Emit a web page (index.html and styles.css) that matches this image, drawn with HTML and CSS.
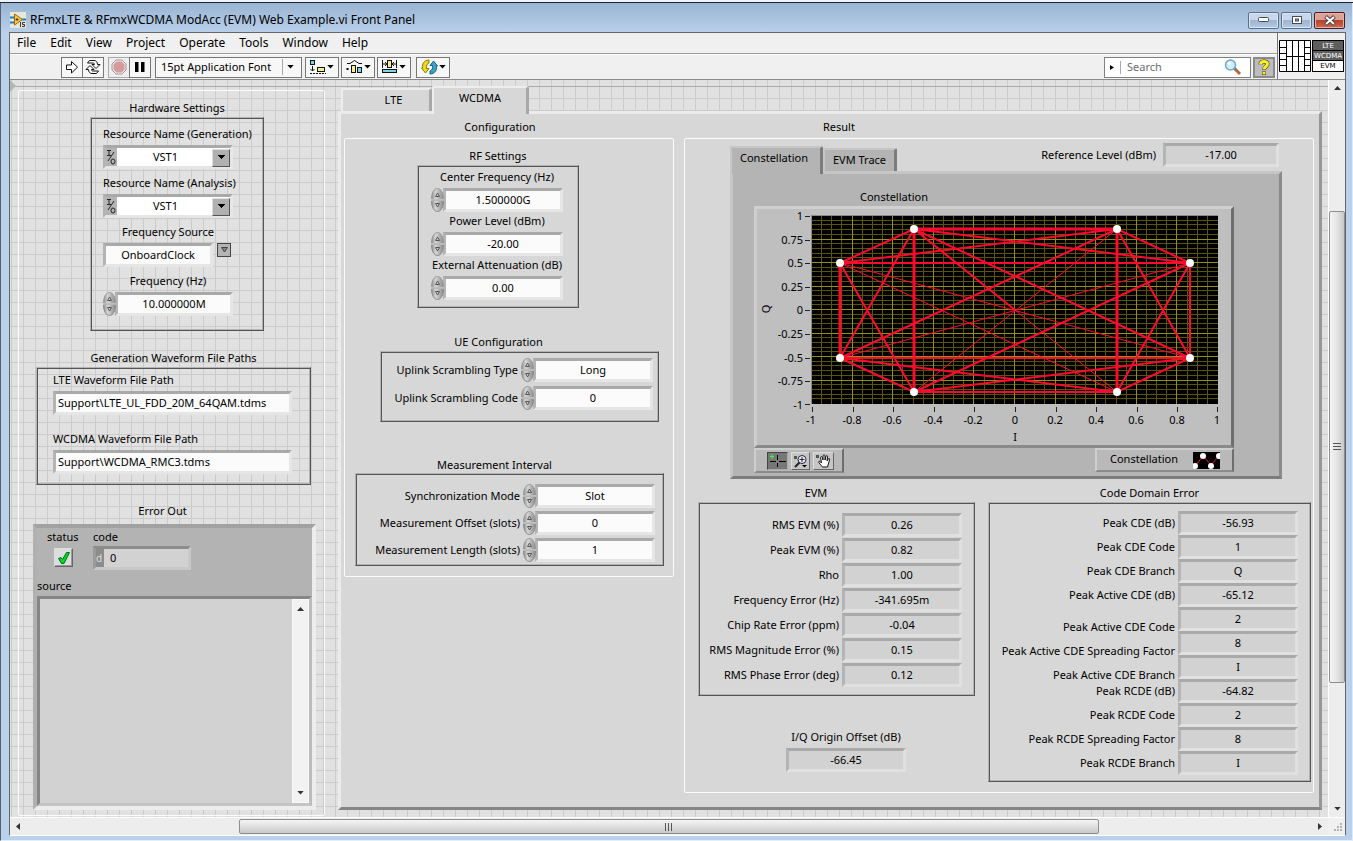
FILE: index.html
```html
<!DOCTYPE html>
<html lang="en">
<head>
<meta charset="utf-8">
<title>RFmxLTE &amp; RFmxWCDMA ModAcc (EVM) Web Example.vi Front Panel</title>
<link rel="stylesheet" href="styles.css">
</head>
<body>
<svg class="defs" aria-hidden="true">
  <defs>
    <linearGradient id="knob" x1="0" y1="0" x2="1" y2="0">
      <stop offset="0" stop-color="#8c8c8c"/><stop offset="0.35" stop-color="#d6d6d6"/><stop offset="1" stop-color="#8a8a8a"/>
    </linearGradient>
    <symbol id="spin" viewBox="0 0 13 24">
      <path d="M0.5 11.5C0.5 5 3 0.5 6.5 0.5S12.5 5 12.5 11.5Z" fill="url(#knob)" stroke="#999"/>
      <path d="M0.5 12.5C0.5 19 3 23.5 6.5 23.5S12.5 19 12.5 12.5Z" fill="url(#knob)" stroke="#8a8a8a"/>
      <path d="M4.500 8.500L6.500 5L8.500 8.500Z" fill="#ccc" stroke="#555"/>
      <path d="M4.500 15.500L6.500 19L8.500 15.500Z" fill="#ccc" stroke="#555"/>
      <path d="M0 12H13" stroke="#e4e4e4"/>
    </symbol>
    <symbol id="down" viewBox="0 0 8 5"><path d="M0 0H8L4 4.5Z"/></symbol>
  </defs>
</svg>

<div class="behind"></div>
<div class="window">
  <header class="titlebar">
    <svg class="vi-icon" width="16" height="16" viewBox="0 0 16 16">
      <rect width="16" height="16" fill="#e9e6da"/>
      <path d="M0 5.5H5M0 10.5H5M11 7.5H16" stroke="#1d7fc0" stroke-width="2"/>
      <path d="M4.500 2L12.500 7.500L4.500 13Z" fill="#f6c64a" stroke="#9b6a10"/>
      <path d="M5.500 7.500H8.500M7 6V9" stroke="#5a3a00"/>
      <path d="M10.500 10V15M15 10.500H12.500V12.500H14.500V14.500H12" stroke="#333" fill="none"/>
    </svg>
    <h1>RFmxLTE &amp; RFmxWCDMA ModAcc (EVM) Web Example.vi Front Panel</h1>
    <div class="win-buttons">
      <button class="win-btn" aria-label="Minimize"><svg width="12" height="6"><rect x="0.5" y="0.5" width="10" height="4" rx="1" fill="#fff" stroke="#454b58"/></svg></button>
      <button class="win-btn" aria-label="Restore"><svg width="12" height="10"><rect x="1.5" y="1.500" width="9" height="7" fill="#fff" stroke="#454b58"/><rect x="4.500" y="4" width="3" height="2" fill="#8ba6c8" stroke="#454b58"/></svg></button>
      <button class="win-btn close" aria-label="Close"><svg width="14" height="11"><path d="M2.500 1.500L11.500 9.500M11.500 1.500L2.500 9.500" stroke="#4b4347" stroke-width="4"/><path d="M3 2L11 9M11 2L3 9" stroke="#fff" stroke-width="2"/></svg></button>
    </div>
  </header>

  <div class="client">
    <div class="bars">
      <div class="bars-main">
        <nav class="menu">
          <button>File</button><button>Edit</button><button>View</button><button>Project</button><button>Operate</button><button>Tools</button><button>Window</button><button>Help</button>
        </nav>
        <div class="toolbar">
          <div class="tool-group">
            <button class="tool" aria-label="Run"><svg width="14" height="14" viewBox="0 0 14 14"><path d="M1.500 5V9.500H6.500V13L12.500 7.200L6.500 1.500V5Z" fill="#fff" stroke="#111"/></svg></button>
            <button class="tool" aria-label="Run continuously"><svg width="16" height="16" viewBox="0 0 16 16" fill="none" stroke="#111"><path d="M4.500 1.500H9C11 1.500 12.500 3 12.500 5.500H15L11 9.500L7 5.500H9.500C9.500 4.500 9 4 8 4H2.500Z" fill="#fff"/><path d="M11.500 14.500H7C5 14.500 3.500 13 3.500 10.500H1L5 6.500L9 10.500H6.500C6.500 11.500 7 12 8 12H13.500Z" fill="#fff"/></svg></button>
          </div>
          <div class="tool-group">
            <button class="tool dim" aria-label="Abort"><svg width="16" height="16" viewBox="0 0 16 16"><path d="M5 1H11L15 5V11L11 15H5L1 11V5Z" fill="#f2e8e8" stroke="#9a9a9a"/><path d="M5.500 2.500H10.500L13.500 5.500V10.500L10.500 13.500H5.500L2.500 10.500V5.500Z" fill="#d79a9a"/></svg></button>
            <button class="tool" aria-label="Pause"><svg width="12" height="12"><path d="M1 1H4.500V11H1ZM7 1H10.500V11H7Z"/></svg></button>
          </div>
          <button class="tool font-box"><span>15pt Application Font</span><i></i><svg width="7" height="4"><use href="#down"/></svg></button>
          <button class="tool drop" aria-label="Align objects"><svg width="16" height="14" viewBox="0 0 16 14"><rect x="0.500" y="0.500" width="4" height="4" fill="#7fd4ea" stroke="#111"/><rect x="7.500" y="7.500" width="7" height="4" fill="#f7ef8a" stroke="#111"/><path d="M2.500 6V11M0.500 9L2.500 11L4.500 9" stroke="#111" fill="none"/><path d="M0 13.500H16" stroke="#111" stroke-dasharray="2 1"/></svg><svg width="7" height="4"><use href="#down"/></svg></button>
          <button class="tool drop" aria-label="Distribute objects"><svg width="17" height="14" viewBox="0 0 17 14"><path d="M1 3.500H4L8.500 0.500L13 3.500H16" stroke="#111" fill="none"/><rect x="0.500" y="8" width="2" height="2"/><rect x="5.500" y="5.500" width="4" height="7" fill="#f7ef8a" stroke="#111"/><rect x="11.500" y="7.500" width="4" height="5" fill="#7fd4ea" stroke="#111"/></svg><svg width="7" height="4"><use href="#down"/></svg></button>
          <button class="tool drop" aria-label="Resize objects"><svg width="16" height="14" viewBox="0 0 16 14"><rect x="5.500" y="0.500" width="4" height="7" fill="#f7ef8a" stroke="#111"/><path d="M0.500 0V8M14.500 0V8M1 4H5M10 4H14M3 2L5 4L3 6M12 2L10 4L12 6" stroke="#111" fill="none"/><rect x="0.500" y="9.500" width="14" height="3" fill="#7fd4ea" stroke="#111"/></svg><svg width="7" height="4"><use href="#down"/></svg></button>
          <button class="tool drop last" aria-label="Reorder"><svg width="17" height="16" viewBox="0 0 17 16"><path d="M8 1C3 1 1 5 1.500 9H0.500L4.500 14L8 9.500H5.500C5 7 6 4.500 8 4Z" fill="#ecd81c" stroke="#8f7a00"/><path d="M9 15C14 15 16 11 15.500 7H16.500L12.500 2L9 6.500H11.500C12 9 11 11.500 9 12Z" fill="#3fa3c4" stroke="#15627e"/></svg><svg width="7" height="4"><use href="#down"/></svg></button>
          <div class="search">
            <svg width="6" height="11"><path d="M0 3L4 5.500L0 8Z"/></svg>
            <input type="text" placeholder="Search" aria-label="Search">
            <svg width="18" height="17" viewBox="0 0 18 17"><path d="M10 9L16 15" stroke="#b5663c" stroke-width="3"/><path d="M9.500 8.500L12 11" stroke="#777" stroke-width="2"/><circle cx="6.500" cy="6" r="5" fill="#cfeefb" stroke="#6fa5cf" stroke-width="1.500"/><circle cx="5" cy="4.500" r="1.500" fill="#fff"/></svg>
          </div>
          <button class="tool help" aria-label="Context help"><svg width="12" height="17" viewBox="0 0 12 17"><path d="M2.500 5.500C2.500 1.500 9.500 1.500 9.500 5C9.500 7.500 6 7.500 6 11M6 12.500V16" fill="none" stroke="#333" stroke-width="4"/><path d="M2.500 5.500C2.500 1.500 9.500 1.500 9.500 5C9.500 7.500 6 7.500 6 10.500M6 13V15.500" fill="none" stroke="#fff01a" stroke-width="3"/></svg></button>
        </div>
      </div>
      <div class="connector">
        <svg width="32" height="32" viewBox="0 0 32 32"><path d="M0.500 0.500H31.500V31.500H0.500ZM7.500 0.500V31.500M13.500 0.500V31.500M19.500 0.500V31.500M25.500 0.500V31.500M7.500 16.500H25.500M0.500 7.500H7.500M0.500 13.500H7.500M0.500 19.500H7.500M0.500 25.500H7.500M25.500 7.500H31.500M25.500 13.500H31.500M25.500 19.500H31.500M25.500 25.500H31.500" fill="#fff" stroke="#000"/></svg>
        <div class="vi-badge"><b>LTE</b><b>WCDMA</b><em>EVM</em></div>
      </div>
    </div>

    <div class="middle">
      <main class="workspace">
        <section class="left-frame">
          <div class="sec hw">
            <h2>Hardware Settings</h2>
            <div class="box">
              <div class="field"><label for="rg">Resource Name (Generation)</label>
                <div class="io"><span class="io-mark"><svg width="10" height="16" viewBox="0 0 10 16" fill="none" stroke="#222"><path d="M1 1.500H5M3 1.500V6.500M1 6.500H5M8 3L2 12"/><ellipse cx="7" cy="12.500" rx="2" ry="2.500"/></svg></span>
                  <select id="rg"><option>VST1</option></select></div></div>
              <div class="field"><label for="ra">Resource Name (Analysis)</label>
                <div class="io"><span class="io-mark"><svg width="10" height="16" viewBox="0 0 10 16" fill="none" stroke="#222"><path d="M1 1.500H5M3 1.500V6.500M1 6.500H5M8 3L2 12"/><ellipse cx="7" cy="12.500" rx="2" ry="2.500"/></svg></span>
                  <select id="ra"><option>VST1</option></select></div></div>
              <div class="field"><label for="fs">Frequency Source</label>
                <div class="combo"><input class="val" id="fs" type="text" value="OnboardClock"><button aria-label="Open list"><svg width="7" height="6"><path d="M0.500 0.500H6.500L3.500 5Z" fill="#888" stroke="#444"/></svg></button></div></div>
              <div class="field"><label for="fq">Frequency (Hz)</label>
                <div class="num"><button class="spin" aria-label="Step frequency"><svg><use href="#spin"/></svg></button><input class="val" id="fq" type="text" value="10.000000M"></div></div>
            </div>
          </div>

          <div class="sec paths">
            <h2>Generation Waveform File Paths</h2>
            <div class="box">
              <div class="field"><label for="lp">LTE Waveform File Path</label><input class="val" id="lp" type="text" value="Support\LTE_UL_FDD_20M_64QAM.tdms"></div>
              <div class="field"><label for="wp">WCDMA Waveform File Path</label><input class="val" id="wp" type="text" value="Support\WCDMA_RMC3.tdms"></div>
            </div>
          </div>

          <div class="sec err">
            <h2>Error Out</h2>
            <div class="cluster">
              <div class="cluster-top">
                <div class="status"><span>status</span><div class="led"><svg width="14" height="14" viewBox="0 0 14 14"><path d="M1.500 7.500L4 6.500L5.500 8.500L9.500 1.500H12.500L7 12.500H4.500Z" fill="#00e000" stroke="#064"/></svg></div></div>
                <div class="code"><label for="cd">code</label><div class="code-field"><span>d</span><output id="cd">0</output></div></div>
              </div>
              <label for="src" class="src-label">source</label>
              <div class="source">
                <output id="src"></output>
                <div class="mini-scroll"><svg width="7" height="4"><path d="M0 4L3.500 0L7 4Z" fill="#333"/></svg><svg width="7" height="4" fill="#333"><use href="#down"/></svg></div>
              </div>
            </div>
          </div>
        </section>

        <section class="tabs-outer">
          <div class="tabs big" role="tablist">
            <button role="tab" class="tab lte">LTE</button><button role="tab" class="tab on wcdma" aria-selected="true">WCDMA</button>
          </div>
          <div class="tab-page">
            <div class="config">
              <h2 class="page-title">Configuration</h2>
              <div class="frame">
                <div class="sec rf">
                  <h2>RF Settings</h2>
                  <div class="box">
                    <div class="field"><label for="cf">Center Frequency (Hz)</label><div class="num"><button class="spin" aria-label="Step center frequency"><svg><use href="#spin"/></svg></button><input class="val" id="cf" type="text" value="1.500000G"></div></div>
                    <div class="field"><label for="pl">Power Level (dBm)</label><div class="num"><button class="spin" aria-label="Step power level"><svg><use href="#spin"/></svg></button><input class="val" id="pl" type="text" value="-20.00"></div></div>
                    <div class="field"><label for="ea">External Attenuation (dB)</label><div class="num"><button class="spin" aria-label="Step attenuation"><svg><use href="#spin"/></svg></button><input class="val" id="ea" type="text" value="0.00"></div></div>
                  </div>
                </div>
                <div class="sec ue">
                  <h2>UE Configuration</h2>
                  <div class="box">
                    <div class="row"><label for="ut">Uplink Scrambling Type</label><div class="num"><button class="spin" aria-label="Step scrambling type"><svg><use href="#spin"/></svg></button><input class="val" id="ut" type="text" value="Long"></div></div>
                    <div class="row"><label for="uc">Uplink Scrambling Code</label><div class="num"><button class="spin" aria-label="Step scrambling code"><svg><use href="#spin"/></svg></button><input class="val" id="uc" type="text" value="0"></div></div>
                  </div>
                </div>
                <div class="sec meas">
                  <h2>Measurement Interval</h2>
                  <div class="box">
                    <div class="row"><label for="sm">Synchronization Mode</label><div class="num"><button class="spin" aria-label="Step mode"><svg><use href="#spin"/></svg></button><input class="val" id="sm" type="text" value="Slot"></div></div>
                    <div class="row"><label for="mo">Measurement Offset (slots)</label><div class="num"><button class="spin" aria-label="Step offset"><svg><use href="#spin"/></svg></button><input class="val" id="mo" type="text" value="0"></div></div>
                    <div class="row"><label for="ml">Measurement Length (slots)</label><div class="num"><button class="spin" aria-label="Step length"><svg><use href="#spin"/></svg></button><input class="val" id="ml" type="text" value="1"></div></div>
                  </div>
                </div>
              </div>
            </div>

            <div class="result">
              <h2 class="page-title">Result</h2>
              <div class="frame">
                <div class="result-head">
                  <div class="tabs" role="tablist"><button role="tab" class="tab on" aria-selected="true">Constellation</button><button role="tab" class="tab">EVM Trace</button></div>
                  <div class="row ref"><label for="rl">Reference Level (dBm)</label><output class="ind" id="rl">-17.00</output></div>
                </div>
                <div class="graph-page">
                  <div class="graph-wrap">
                    <h3>Constellation</h3>
                    <div class="graph">
                      <svg width="474" height="236" viewBox="3 3 474 236">
                        <g class="ticks">
                          <path d="M51 10.500H56M51 34.500H56M51 57.500H56M51 81.500H56M51 104.500H56M51 128.500H56M51 152.500H56M51 175.500H56M51 198.500H56M58.500 201V206M99.500 201V206M139.500 201V206M180.500 201V206M220.500 201V206M261.500 201V206M302.500 201V206M342.500 201V206M383.500 201V206M423.500 201V206M463.500 201V206" stroke="#222"/>
                          <g text-anchor="end">
                            <text x="49" y="14">1</text><text x="49" y="38">0.75</text><text x="49" y="61">0.5</text><text x="49" y="85">0.25</text><text x="49" y="108">0</text><text x="49" y="132">-0.25</text><text x="49" y="156">-0.5</text><text x="49" y="179">-0.75</text><text x="49" y="203">-1</text>
                          </g>
                          <g text-anchor="middle">
                            <text x="57" y="218">-1</text><text x="98" y="218">-0.8</text><text x="138" y="218">-0.6</text><text x="179" y="218">-0.4</text><text x="219" y="218">-0.2</text><text x="261" y="218">0</text><text x="301" y="218">0.2</text><text x="342" y="218">0.4</text><text x="382" y="218">0.6</text><text x="423" y="218">0.8</text><text x="463" y="218">1</text>
                            <text x="261" y="235">I</text>
                            <text transform="translate(16 103) rotate(-90)">Q</text>
                          </g>
                        </g>
                        <svg x="57" y="9" width="407" height="189" viewBox="0 0 407 189">
                          <rect width="407" height="189" fill="#000"/>
                          <g fill="none" shape-rendering="crispEdges">
                            <path stroke="#5c5408" d="M10.500 0V189M20.500 0V189M30.500 0V189M51.500 0V189M61.500 0V189M71.500 0V189M91.500 0V189M102.500 0V189M112.500 0V189M132.500 0V189M142.500 0V189M152.500 0V189M173.500 0V189M183.500 0V189M193.500 0V189M213.500 0V189M223.500 0V189M233.500 0V189M254.500 0V189M264.500 0V189M274.500 0V189M294.500 0V189M305.500 0V189M315.500 0V189M335.500 0V189M345.500 0V189M355.500 0V189M376.500 0V189M386.500 0V189M396.500 0V189M0 5.500H407M0 9.500H407M0 14.500H407M0 19.500H407M0 28.500H407M0 33.500H407M0 38.500H407M0 42.500H407M0 52.500H407M0 56.500H407M0 61.500H407M0 66.500H407M0 75.500H407M0 80.500H407M0 85.500H407M0 89.500H407M0 99.500H407M0 103.500H407M0 108.500H407M0 113.500H407M0 122.500H407M0 127.500H407M0 132.500H407M0 136.500H407M0 146.500H407M0 150.500H407M0 155.500H407M0 160.500H407M0 169.500H407M0 174.500H407M0 179.500H407M0 183.500H407"/>
                            <path stroke="#96900c" d="M41.500 0V189M81.500 0V189M122.500 0V189M162.500 0V189M203.500 0V189M244.500 0V189M284.500 0V189M325.500 0V189M365.500 0V189M0 24.500H407M0 47.500H407M0 71.500H407M0 94.500H407M0 118.500H407M0 141.500H407M0 165.500H407"/>
                            <path stroke="#8a8a8a" d="M0 0.500H407M0.500 0V189"/>
                          </g>
                          <g fill="none" stroke="#ff0a2e" stroke-width="2">
                            <path d="M29 48L103 14H306L379 48V143L306 177H103L29 143ZM29 48L306 14M103 14L379 48M29 143L306 177M103 177L379 143M29 48L103 177M29 143L103 14M306 14L379 143M306 177L379 48M29 48H379M29 143H379"/>
                            <path stroke-width="3" d="M29 48V143M103 14V177M306 14V177M103 14H306"/>
                            <path d="M103 14L379 143M103 177L379 48M29 143L306 14M103 14L204 95"/>
                            <path stroke-width="1" d="M29 48L306 177M29 48L379 143M29 143L379 48M103 177L306 14M204 95L306 177"/>
                          </g>
                          <g fill="#fff"><circle cx="29" cy="48" r="4"/><circle cx="103" cy="14" r="4"/><circle cx="306" cy="14" r="4"/><circle cx="379" cy="48" r="4"/><circle cx="29" cy="143" r="4"/><circle cx="103" cy="177" r="4"/><circle cx="306" cy="177" r="4"/><circle cx="379" cy="143" r="4"/></g>
                        </svg>
                      </svg>
                    </div>
                    <div class="graph-foot">
                      <div class="palette">
                        <button class="pressed" aria-label="Cursor"><svg width="17" height="14"><path d="M8.500 1V13M1 7.500H17" stroke="#000"/><circle cx="8.500" cy="7.500" r="1.500" fill="#888"/><path d="M1 2.500H5M3 0V5" stroke="#3f3"/></svg></button>
                        <button aria-label="Zoom"><svg width="15" height="14"><rect x="1" y="2" width="3" height="3" fill="#465a46"/><path d="M7 8L2 13" stroke="#222" stroke-width="2"/><circle cx="9" cy="5.500" r="4" fill="#f1f1ff" stroke="#223"/><path d="M6.500 5.500H11.500M9 3V8" stroke="#223"/><path d="M9 11H14L11.500 13.500Z"/></svg></button>
                        <button aria-label="Pan"><svg width="17" height="14"><rect x="1" y="1" width="3" height="3" fill="#465a46"/><path d="M7.500 13C6 11 4 9 3.500 8C4 6.500 5.500 7.500 6.500 9L5.500 3.500C6 2 7 2.500 7.500 4L8 6L8 1.500C9 0.500 10 1 10 2V6L11 2C12 1.200 13 2 12.500 3L12 7L13.500 4.500C14.500 4.200 15 5 14.500 6L12.500 13Z" fill="#fff" stroke="#111"/></svg></button>
                      </div>
                      <div class="legend"><span>Constellation</span>
                        <svg width="27" height="17"><rect width="27" height="17" fill="#000"/><path d="M3 13L10 4L18 13L26 4" fill="none" stroke="#ff0a2e"/><g fill="#fff"><circle cx="2" cy="14" r="3"/><circle cx="10" cy="4" r="3"/><circle cx="18" cy="14" r="3"/><circle cx="26" cy="4" r="3"/></g></svg>
                      </div>
                    </div>
                  </div>
                </div>

                <div class="result-bottom">
                  <div class="evm-col">
                    <div class="sec evm">
                      <h2>EVM</h2>
                      <div class="box">
                        <div class="row"><label for="e1">RMS EVM (%)</label><output class="ind" id="e1">0.26</output></div>
                        <div class="row"><label for="e2">Peak EVM (%)</label><output class="ind" id="e2">0.82</output></div>
                        <div class="row"><label for="e3">Rho</label><output class="ind" id="e3">1.00</output></div>
                        <div class="row"><label for="e4">Frequency Error (Hz)</label><output class="ind" id="e4">-341.695m</output></div>
                        <div class="row"><label for="e5">Chip Rate Error (ppm)</label><output class="ind" id="e5">-0.04</output></div>
                        <div class="row"><label for="e6">RMS Magnitude Error (%)</label><output class="ind" id="e6">0.15</output></div>
                        <div class="row"><label for="e7">RMS Phase Error (deg)</label><output class="ind" id="e7">0.12</output></div>
                      </div>
                    </div>
                    <div class="field iq"><label for="iq">I/Q Origin Offset (dB)</label><output class="ind" id="iq">-66.45</output></div>
                  </div>
                  <div class="sec cde">
                    <h2>Code Domain Error</h2>
                    <div class="box">
                      <div class="row"><label for="c1">Peak CDE (dB)</label><output class="ind" id="c1">-56.93</output></div>
                      <div class="row"><label for="c2">Peak CDE Code</label><output class="ind" id="c2">1</output></div>
                      <div class="row"><label for="c3">Peak CDE Branch</label><output class="ind" id="c3">Q</output></div>
                      <div class="row"><label for="c4">Peak Active CDE (dB)</label><output class="ind" id="c4">-65.12</output></div>
                      <div class="row low"><label for="c5">Peak Active CDE Code</label><output class="ind" id="c5">2</output></div>
                      <div class="row low"><label for="c6">Peak Active CDE Spreading Factor</label><output class="ind" id="c6">8</output></div>
                      <div class="row low"><label for="c7">Peak Active CDE Branch</label><output class="ind" id="c7">I</output></div>
                      <div class="row"><label for="c8">Peak RCDE (dB)</label><output class="ind" id="c8">-64.82</output></div>
                      <div class="row"><label for="c9">Peak RCDE Code</label><output class="ind" id="c9">2</output></div>
                      <div class="row"><label for="c10">Peak RCDE Spreading Factor</label><output class="ind" id="c10">8</output></div>
                      <div class="row"><label for="c11">Peak RCDE Branch</label><output class="ind" id="c11">I</output></div>
                    </div>
                  </div>
                </div>
              </div>
            </div>
          </div>
        </section>
      </main>
      <div class="vscroll">
        <button aria-label="Scroll up"><svg width="7" height="4"><path d="M0 4L3.500 0L7 4Z"/></svg></button>
        <i class="space-up"></i>
        <div class="thumb"><svg width="8" height="9"><path d="M0 0.500H8M0 3.500H8M0 6.500H8" stroke="#555"/></svg></div>
        <i class="space-down"></i>
        <button aria-label="Scroll down"><svg width="7" height="4"><use href="#down"/></svg></button>
      </div>
    </div>
    <div class="bottom">
      <div class="hscroll">
        <button aria-label="Scroll left"><svg width="4" height="7"><path d="M4 0V7L0 3.500Z"/></svg></button>
        <i class="space"></i>
        <div class="thumb"><svg width="9" height="8"><path d="M0.500 0V8M3.500 0V8M6.500 0V8" stroke="#555"/></svg></div>
        <i class="space"></i>
        <button aria-label="Scroll right"><svg width="4" height="7"><path d="M0 0V7L4 3.500Z"/></svg></button>
      </div>
      <div class="grip"><svg width="10" height="10"><path d="M7 1H9M4 4H6M7 4H9M1 7H3M4 7H6M7 7H9" stroke="#b4b4b4" stroke-width="2"/></svg></div>
    </div>
  </div>
</div>
</body>
</html>
```
FILE: styles.css
```css
* { box-sizing: border-box; }
body { margin: 0; min-height: 100vh; display: flex; flex-direction: column; background: #fff; color: #000; font: 11px/18px "Noto Sans", "Open Sans", sans-serif; }
h1, h2, h3 { margin: 0; font-size: 11px; font-weight: 400; white-space: nowrap; }
button, input, select { font: inherit; color: inherit; margin: 0; padding: 0; border: 0; background: none; border-radius: 0; }
label { white-space: nowrap; }
output { display: block; }
svg { display: block; flex: none; }
.defs { position: absolute; width: 0; height: 0; }

.behind { height: 3px; background: #eef4fa; border-bottom: 1px solid #1c232c; }
.window { flex: 1; display: flex; flex-direction: column; padding: 0 6px 4px 8px; background: #b9d1ea; border-left: 1px solid #56606c; border-right: 1px solid #dfeaf6; border-bottom: 1px solid #e4eef8; }

.titlebar { height: 29px; margin: 0 -6px 0 -8px; padding: 0 7px 0 9px; display: flex; align-items: center; gap: 4px; background: linear-gradient(#98b4d2, #b9cfe9); }
.titlebar h1 { padding-top: 5px; font-size: 12px; flex: 1; }
.vi-icon { margin-top: 4px; }
.win-buttons { display: flex; gap: 2px; margin-top: 5px; }
.win-btn { width: 31px; height: 17px; display: flex; align-items: center; justify-content: center; border: 1px solid #5b6e88; border-radius: 2px; background: linear-gradient(#c8d8ea 45%, #9db4d0 50%, #b4cae4); box-shadow: inset 0 0 0 1px #dbe6f2; }
.win-btn.close { border-color: #4e1a1a; background: linear-gradient(#dca295 45%, #b8412c 50%, #cc6c52); box-shadow: inset 0 0 0 1px #e5b3a6; }

.client { flex: 1; display: flex; flex-direction: column; border: 1px solid #63666b; border-bottom-color: #fff; background: #f0f0f0; }
.bars { display: flex; height: 47px; border-bottom: 1px solid #8a8a8a; }
.bars-main { flex: 1; }
.menu { height: 21px; display: flex; align-items: center; gap: 14px; padding-left: 7px; border-bottom: 1px solid #9c9c9c; font-size: 12px; }
.toolbar { height: 25px; display: flex; align-items: center; padding: 0 2px 0 51px; border-top: 1px solid #fff; }
.tool-group { display: flex; margin-right: 4px; }
.tool { height: 21px; display: flex; align-items: center; justify-content: center; border: 1px solid #777; background: #f7f7f7; }
.tool-group .tool { width: 22px; }
.tool-group .tool + .tool { margin-left: -1px; }
.tool.dim { border-color: #aaa; background: #eee; }
.font-box { width: 147px; padding: 0 7px 0 5px; justify-content: space-between; margin-right: 3px; }
.font-box i { width: 1px; height: 16px; background: #aaa; margin-left: 6px; }
.font-box span { flex: 1; text-align: left; }
.font-box svg { margin-left: 4px; }
.drop { width: 34px; margin-right: 2px; }
.drop svg + svg { margin-left: 1px; }
.drop.last { margin-left: 3px; }
.search { width: 147px; height: 21px; display: flex; align-items: center; margin: 0 2px 0 auto; padding: 0 8px 0 5px; border: 1px solid #808080; background: #fff; }
.search input { flex: 1; min-width: 0; margin-left: 4px; padding-left: 6px; border-left: 1px solid #aaa; height: 13px; font-size: 11px; }
.search input::placeholder { color: #6d6d6d; opacity: 1; }
.tool.help { width: 22px; border: 2px solid #8a8a8a; background: #bdbdbd; }
.connector { width: 68px; display: flex; align-items: center; gap: 1px; padding-left: 1px; border-left: 1px solid #777; }
.vi-badge { width: 32px; height: 32px; border: 1px solid #000; background: #fff; font: 8px/10px "DejaVu Sans", sans-serif; text-align: center; }
.vi-badge b, .vi-badge em { display: block; height: 10px; font-style: normal; font-size: 7px; font-weight: 400; }
.vi-badge b { background: #5e5e5e; color: #fff; border-bottom: 1px solid #000; }

.middle { flex: 1; display: flex; }
.workspace { flex: 1; display: flex; min-width: 0; background-color: #e1e1e1;
  background-image: linear-gradient(#aaa, #aaa), linear-gradient(#cbcbcb 1px, transparent 1px), linear-gradient(90deg, #cbcbcb 1px, transparent 1px);
  background-size: 100% 1px, 12px 12px, 12px 12px; background-position: 0 6px, 0 6px, 1px 0; background-repeat: no-repeat, repeat, repeat; }
.workspace::before { content: ""; position: absolute; border: solid transparent; border-width: 6px 0 6px 6px; border-left-color: #b4b4b4; }

.left-frame { width: 307px; margin: 10px 0 1px 8px; padding: 9px 1px 5px; border: 1px solid #fcfcfc; border-radius: 2px; display: flex; flex-direction: column; }
.sec h2 { height: 17px; line-height: 15px; text-align: center; }
.box { border: 1px solid; border-color: #b2b2b2 #555 #555 #b2b2b2; box-shadow: inset 1px 1px 0 #555, inset -1px -1px 0 #b2b2b2; }
.field { display: flex; flex-direction: column; }
.field > label { height: 20px; text-align: center; }

.val, .io, .ind, .code-field { height: 24px; border: 3px solid; border-color: #a9a9a9 #e6e6e6 #e6e6e6 #b4b4b4; background: #fbfbfb; }
.val { width: 100%; min-width: 0; padding-bottom: 2px; text-align: center; }
.ind { width: 120px; flex: none; background: #d2d2d2; text-align: center; line-height: 18px; border-color: #a9a9a9 #e0e0e0 #e0e0e0 #b4b4b4; }
.num { display: flex; align-items: center; }
.num .val { width: 120px; }
.spin { width: 14px; height: 24px; flex: none; margin-right: -2px; position: relative; }
.spin svg { width: 13px; height: 24px; }
.row { display: flex; align-items: center; justify-content: flex-end; gap: 3px; }

.hw { width: 174px; margin-left: 70px; }
.hw .box { display: flex; flex-direction: column; gap: 5px; padding: 7px 0 14px 12px; }
.hw .field { width: 130px; }
.io { display: flex; position: relative; }
.io-mark { width: 11px; background: #b4b4b4; display: flex; align-items: center; }
.io select { flex: 1; appearance: none; text-align: center; text-align-last: center; padding: 0 16px 1px 0; background: #fff; }
.io::after { content: ""; position: absolute; right: 0; top: 1px; width: 16px; height: 16px; border: 1px solid; border-color: #ddd #555 #555 #ddd; pointer-events: none;
  background: linear-gradient(#000, #000) center 5px / 7px 1px no-repeat, linear-gradient(#000, #000) center 6px / 5px 1px no-repeat, linear-gradient(#000, #000) center 7px / 3px 1px no-repeat, linear-gradient(#000, #000) center 8px / 1px 1px no-repeat, #b0b0b0; }
.combo { display: flex; align-items: flex-start; gap: 4px; }
.combo button { width: 14px; height: 14px; flex: none; margin-right: 2px; display: flex; align-items: center; justify-content: center; border: 1px solid #444; background: #b4b4b4; }

.paths { width: 275px; margin: 19px 0 0 16px; }
.paths .box { display: flex; flex-direction: column; gap: 15px; padding: 3px 18px 10px 16px; }
.paths .val, .paths .field > label { text-align: left; }
.paths .val { padding-left: 2px; }

.err { flex: 1; display: flex; flex-direction: column; width: 283px; margin: 18px 0 0 13px; }
.err h2 { margin: 0 24px 4px 0; }
.cluster { flex: 1; display: flex; flex-direction: column; border: 4px solid; border-color: #a2a2a2 #ededed #ededed #b0b0b0; background: #b3b3b3; }
.cluster-top { display: flex; padding-left: 10px; }
.status { width: 46px; display: flex; flex-direction: column; align-items: flex-start; }
.led { width: 19px; height: 19px; margin: 2px 0 0 7px; display: flex; align-items: center; justify-content: center; background: #ddd; border: 1px solid; border-color: #ddd #666 #666 #ddd; box-shadow: inset -1px -1px 0 #999; }
.code { display: flex; flex-direction: column; }
.code-field { width: 98px; display: flex; background: #d2d2d2; border-color: #8c8c8c #c8c8c8 #c8c8c8 #9a9a9a; }
.code-field span { width: 8px; background: #8c8c8c; color: #ddd; line-height: 18px; font-size: 10px; }
.code-field output { flex: 1; padding-left: 6px; line-height: 18px; }
.src-label { margin: 7px 0 1px; }
.source { flex: 1; display: flex; border: 3px solid; border-color: #868686 #bcbcbc #c4c4c4 #868686; background: #d2d2d2; }
.source output { flex: 1; }
.mini-scroll { width: 17px; background: #f2f2f2; border: 1px solid #fafafa; display: flex; flex-direction: column; align-items: center; justify-content: space-between; padding: 7px 0; }

.tabs-outer { flex: 1; min-width: 0; display: flex; flex-direction: column; margin: 6px 6px 7px 13px; }
.tabs { display: flex; align-items: flex-end; }
.big { height: 25px; padding-left: 3px; }
.tab { height: 23px; padding: 0 8px 2px; border: solid; border-width: 2px 3px 0 2px; border-color: #c6c6c6 #7c7c7c #c6c6c6 #c6c6c6; background: #b4b4b4; border-radius: 2px 2px 0 0; }
.tab.on { height: 28px; margin-bottom: -3px; padding: 0 12px 7px 8px; position: relative; }
.big .tab { border-color: #ededed #a8a8a8 #ededed #ededed; background: #d7d7d7; }
.big .lte { width: 91px; padding-left: 23px; }
.big .wcdma { width: 97px; padding: 0 8px 7px; }
.tab-page { flex: 1; display: flex; gap: 10px; padding: 2px 5px 14px 3px; background: #d7d7d7; border: 3px solid; border-color: #ebebeb #979797 #858585 #ebebeb; }
.page-title { height: 22px; line-height: 22px; }
.frame { border: 1px solid #fcfcfc; border-radius: 2px; padding: 1px; }
.config { width: 330px; }
.config .page-title { text-align: center; padding-right: 18px; }
.config .frame { padding: 9px 1px 10px; }
.rf { width: 162px; margin-left: 71px; }
.rf .box { padding: 2px 15px 7px 13px; }
.ue { width: 279px; margin: 26px 0 0 34px; }
.ue h2 { padding-right: 42px; }
.ue .box { display: flex; flex-direction: column; gap: 4px; padding: 6px 5px 11px 0; }
.meas { width: 309px; margin: 34px 0 0 9px; }
.meas h2 { padding-right: 30px; line-height: 18px; }
.meas .box { display: flex; flex-direction: column; gap: 3px; padding: 10px 8px 3px 0; }

.result { flex: 1; min-width: 0; display: flex; flex-direction: column; }
.result .page-title { padding-left: 139px; }
.result .frame { flex: 1; display: flex; flex-direction: column; }
.result-head { height: 31px; display: flex; align-items: flex-start; justify-content: space-between; padding: 0 33px 0 44px; }
.result-head .tabs { align-self: flex-end; }
.ref { margin-top: 3px; gap: 7px; }
.ref .ind { width: 116px; }
.graph-page { margin: 0 30px 0 44px; padding: 14px 21px 3px; background: #b4b4b4; border: 3px solid; border-color: #c6c6c6 #8a8a8a #7c7c7c #c6c6c6; }
.graph-wrap { width: 480px; }
.graph-wrap h3 { padding-left: 106px; }
.graph { background: #bfbfbf; border: 3px solid; border-color: #d0d0d0 #6e6e6e #8a8a8a #cdcdcd; }
.ticks text { font-size: 11px; }
.graph-foot { display: flex; justify-content: space-between; align-items: flex-start; }
.palette, .legend { display: flex; align-items: center; border: 2px solid; border-color: #cecece #6e6e6e #8a8a8a #cecece; background: #b9b9b9; }
.palette { width: 90px; height: 25px; gap: 3px; padding-left: 11px; }
.palette button { padding: 1px; border: 1px solid; border-color: #ddd #666 #666 #ddd; background: #c6c6c6; }
.palette .pressed { background: #777; border-color: #444 #aaa #aaa #444; }
.legend { width: 139px; height: 24px; justify-content: space-between; padding: 0 12px 0 13px; }
.legend span { padding-bottom: 2px; }

.result-bottom { display: flex; gap: 13px; padding: 6px 1px 0 12px; }
.evm { width: 277px; }
.evm h2 { padding-right: 41px; }
.evm .box { display: flex; flex-direction: column; gap: 1px; padding: 10px 12px 8px 0; }
.iq { width: 120px; margin: 32px 0 0 88px; }
.cde { flex: 1; }
.cde .box { padding: 8px 12px 6px 0; }
.cde .row { height: 24px; }
.low label { padding-top: 15px; }

.vscroll, .hscroll { display: flex; background: #ededed; }
.vscroll { width: 17px; flex-direction: column; align-items: stretch; border-left: 1px solid #fff; }
.vscroll button, .hscroll button { width: 16px; height: 16px; flex: none; display: flex; align-items: center; justify-content: center; }
.vscroll button svg, .hscroll button svg { fill: #333; }
.thumb { display: flex; align-items: center; justify-content: center; border: 1px solid #8e8e8e; border-radius: 2px; }
.vscroll .thumb { flex: 471; background: linear-gradient(90deg, #f4f4f4, #e4e4e4 50%, #c8c8c8); }
.space-up { flex: 115; }
.space-down { flex: 118; }
.bottom { display: flex; height: 18px; border-top: 1px solid #fff; }
.hscroll { flex: 1; }
.hscroll button { height: 17px; }
.hscroll .thumb { flex: 860; height: 15px; margin-top: 1px; background: linear-gradient(#f4f4f4, #e0e0e0 50%, #c8c8c8); }
.space { flex: 213; }
.grip { width: 17px; display: flex; align-items: flex-end; justify-content: flex-end; padding: 2px; }
```
